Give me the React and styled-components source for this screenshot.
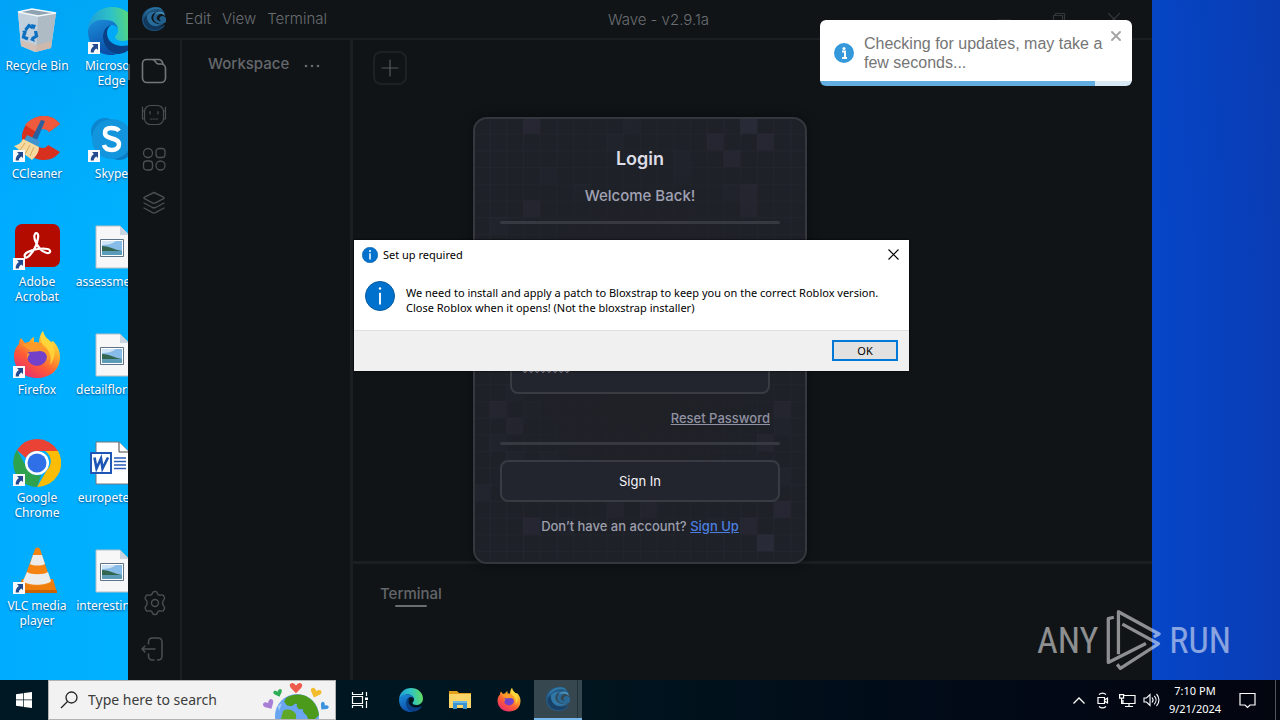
import React, { useId } from "react";
import styled, { createGlobalStyle, css } from "styled-components";

const GlobalStyle = createGlobalStyle`
  *, *::before, *::after { box-sizing: border-box; }
  html, body { margin: 0; }
  body { font-family: "Open Sans", "Noto Sans", sans-serif; overflow: hidden; }
  button, input { font: inherit; color: inherit; margin: 0; }
  button { padding: 0; border: 0; background: none; cursor: pointer; }
  svg { display: block; flex: none; }
`;

const ui = `"Noto Sans", "Open Sans", sans-serif`;
const rounded = `Inter, Roboto, sans-serif`;

/* ---------- desktop ---------- */

const Screen = styled.div`
  position: relative;
  display: grid;
  grid-template-rows: 1fr 40px;
  min-height: 100vh;
`;

const Desktop = styled.main`
  position: relative;
  overflow: hidden;
  background:
    linear-gradient(180deg, rgba(0, 60, 150, 0.08), transparent 35%),
    linear-gradient(90deg, #00acff 0%, #00b2ff 10%, #0546c8 90%, #0a3cb4 100%);
`;

const IconGrid = styled.ul`
  list-style: none;
  margin: 0;
  padding: 7px 0 0;
  display: grid;
  grid-template-columns: 74px 75px;
  grid-auto-rows: 108px;
`;

const DesktopItem = styled.li`
  display: flex;
  flex-direction: column;
  align-items: center;
  gap: 3px;
  color: #fff;
  font: 12px/15px ${ui};
  text-align: center;
  text-shadow: 0 1px 2px rgba(0, 30, 80, 0.7);
`;

const IconBox = styled.div`
  position: relative;
  width: 48px;
  height: 48px;
`;

const Badge = styled.svg`
  position: absolute;
  left: 0;
  bottom: 1px;
`;

const ItemLabel = styled.span`
  width: 74px;
  display: flex;
  justify-content: center;
  white-space: pre-line;
`;

/* ---------- application window ---------- */

const AppWindow = styled.section`
  position: absolute;
  inset: 0 10%;
  display: grid;
  grid-template-rows: 40px 1fr;
  background: #101417;
  color: #6b6e72;
  font-family: ${rounded};
`;

const TitleBar = styled.header`
  display: flex;
  align-items: center;
  justify-content: space-between;
  padding: 0 24px 0 13px;
  border-bottom: 2px solid #1b1e22;
  font-size: 15px;
  font-weight: 300;
`;

const MenuGroup = styled.nav`
  display: flex;
  align-items: center;
  gap: 11px;
`;

const LogoSlot = styled.span`
  margin-right: 7px;
`;

const MenuButton = styled.button`
  line-height: 20px;
`;

const WindowControls = styled.div`
  display: flex;
  gap: 27px;
  color: #33373b;
`;

const ControlButton = styled.button`
  width: 28px;
  height: 28px;
  display: grid;
  place-items: center;
`;

const Body = styled.div`
  display: grid;
  grid-template-columns: 54px 171px 1fr;
`;

const Rail = styled.nav`
  display: flex;
  flex-direction: column;
  justify-content: space-between;
  padding: 13px 0;
  border-right: 2px solid #1b1e22;
`;

const RailGroup = styled.div`
  display: flex;
  flex-direction: column;
  gap: ${(p) => p.$gap}px;
`;

const RailButton = styled.button`
  position: relative;
  width: 100%;
  height: 36px;
  display: grid;
  place-items: center;
  color: ${(p) => (p.$active ? "#74777a" : "#4b4f53")};
  ${(p) =>
    p.$active &&
    css`
      &::before {
        content: "";
        position: absolute;
        left: 0;
        top: 11px;
        width: 2px;
        height: 16px;
        background: #46494d;
      }
    `}
`;

const Workspace = styled.aside`
  display: flex;
  align-items: flex-start;
  justify-content: space-between;
  padding: 14px 30px 0 26px;
  border-right: 3px solid #1b1e22;
  color: #65686c;
`;

const PanelTitle = styled.h2`
  margin: 0;
  font-size: 15px;
  line-height: 20px;
  font-weight: 500;
`;

const DotsButton = styled.button`
  height: 24px;
`;

const Main = styled.div`
  display: grid;
  grid-template-rows: 1fr 119px;
`;

const Editor = styled.section`
  padding: 11px 20px;
`;

const AddTab = styled.button`
  width: 34px;
  height: 34px;
  display: grid;
  place-items: center;
  border: 2px solid #1d2125;
  border-radius: 8px;
  color: #55585c;
`;

const TerminalPanel = styled.section`
  border-top: 3px solid #1b1e22;
  padding: 19px 27px;
`;

const TerminalTab = styled.button`
  display: flex;
  flex-direction: column;
  align-items: center;
  font-size: 15px;
  line-height: 22px;
  font-weight: 500;
  color: #63666a;
  &::after {
    content: "";
    width: 32px;
    height: 2px;
    border-radius: 1px;
    background: #6a6d71;
  }
`;

/* ---------- login ---------- */

const LoginLayer = styled.div`
  position: absolute;
  inset: 0;
  display: grid;
  place-items: center;
  pointer-events: none;
`;

const LoginCard = styled.form`
  position: relative;
  overflow: hidden;
  width: 334px;
  padding: 26px 25px;
  border: 2px solid #34373d;
  border-radius: 14px;
  background: #1f2129;
  display: flex;
  flex-direction: column;
  pointer-events: auto;
  box-shadow: 0 0 12px rgba(0, 0, 0, 0.4);
`;

const CardPattern = styled.svg`
  position: absolute;
  inset: 0;
`;

const CardBody = styled.div`
  position: relative;
  display: flex;
  flex-direction: column;
  text-align: center;
`;

const LoginTitle = styled.h1`
  margin: 0;
  font-size: 18px;
  line-height: 28px;
  font-weight: 600;
  color: #dcdde6;
`;

const Welcome = styled.p`
  margin: 13px 0 15px;
  font-size: 15px;
  line-height: 20px;
  font-weight: 500;
  color: #a0a2b4;
`;

const Divider = styled.hr`
  width: 100%;
  height: 3px;
  margin: 0;
  border: 0;
  border-radius: 2px;
  background: #36393f;
`;

const Fields = styled.div`
  display: flex;
  flex-direction: column;
  gap: 21px;
  padding: 65px 10px 0;
`;

const TextField = styled.input`
  width: 100%;
  height: 42px;
  padding: 0 10px;
  border: 2px solid #383b42;
  border-radius: 8px;
  outline: 0;
  background: #23252e;
  font-size: 12px;
  &::placeholder {
    color: #b4b6c0;
    opacity: 1;
  }
`;

const ResetLink = styled.a`
  align-self: flex-end;
  margin: 14px 10px;
  font-size: 13px;
  line-height: 20px;
  font-weight: 500;
  color: #9092a2;
`;

const SignIn = styled.button`
  height: 42px;
  margin: 15px 0 14px;
  border: 2px solid #383b42;
  border-radius: 8px;
  background: #23252e;
  color: #f4f4f8;
  font-size: 13px;
  font-weight: 400;
`;

const Footnote = styled.p`
  margin: 0;
  font-size: 13px;
  line-height: 20px;
  font-weight: 500;
  color: #9c9eac;
  white-space: nowrap;
  a {
    color: #4b7fe0;
  }
`;

/* ---------- toast ---------- */

const Toast = styled.div`
  position: absolute;
  top: 20px;
  right: 20px;
  width: 312px;
  overflow: hidden;
  display: grid;
  grid-template-columns: 30px 1fr 12px;
  align-items: center;
  padding: 14px 10px 14px 14px;
  border-radius: 6px;
  background: linear-gradient(90deg, #62aee0 88%, #d7e9f5 88%) bottom / 100% 5px no-repeat #fff;
  color: #757575;
  font: 16px/19px "Liberation Sans", Arial, sans-serif;
`;

const ToastText = styled.p`
  margin: 0;
`;

const ToastClose = styled.button`
  align-self: start;
  height: 12px;
  margin-top: -4px;
  color: #a6a6a6;
`;

/* ---------- message box ---------- */

const MessageBox = styled.div`
  position: absolute;
  left: 354px;
  top: 240px;
  width: 555px;
  background: #fff;
  color: #000;
  font: 11px/15px ${ui};
  box-shadow: 0 0 2px #000;
`;

const BoxHeader = styled.header`
  display: flex;
  align-items: center;
  gap: 5px;
  height: 29px;
  padding: 0 10px 0 8px;
`;

const BoxTitle = styled.h2`
  flex: 1;
  margin: 0;
  font-size: 11px;
  font-weight: 400;
`;

const BoxBody = styled.div`
  display: flex;
  gap: 11px;
  padding: 12px 11px 15px;
`;

const BoxText = styled.p`
  margin: 4px 0 0;
  white-space: pre;
`;

const BoxFooter = styled.footer`
  display: flex;
  justify-content: flex-end;
  padding: 9px 11px 10px;
  border-top: 1px solid #dfdfdf;
  background: #f0f0f0;
`;

const OkButton = styled.button`
  width: 66px;
  height: 21px;
  border: 2px solid #0078d7;
  background: #e1e1e1;
  line-height: 15px;
`;

/* ---------- watermark ---------- */

const Watermark = styled.div`
  position: absolute;
  right: 49px;
  bottom: 8px;
  display: flex;
  align-items: center;
  gap: 8px;
  color: #fff;
  opacity: 0.52;
  font: 36px/40px "Liberation Sans Narrow", "Roboto Condensed", "Liberation Sans", sans-serif;
  pointer-events: none;
`;

/* ---------- taskbar ---------- */

const Taskbar = styled.footer`
  display: flex;
  align-items: stretch;
  background: linear-gradient(90deg, #001823 0%, #00151f 45%, #020a18 75%, #03050f 100%);
  color: #fff;
`;

const TaskButton = styled.button`
  position: relative;
  width: 48px;
  display: grid;
  place-items: center;
  ${(p) =>
    p.$active &&
    css`
      background: linear-gradient(90deg, transparent 43px, #22323b 43px, #22323b 44px, transparent 44px) #37474f;
      border-bottom: 2px solid #76b9ed;
    `}
`;

const SearchBox = styled.label`
  width: 288px;
  display: flex;
  align-items: center;
  gap: 10px;
  padding: 0 4px 0 11px;
  border: 1px solid #b0b2b4;
  background: #f2f2f2;
  color: #222;
`;

const SearchInput = styled.input`
  flex: 1;
  min-width: 0;
  padding: 0;
  border: 0;
  outline: 0;
  background: none;
  font: 14px/20px ${ui};
  &::placeholder {
    color: #3c3c3c;
    opacity: 1;
  }
`;

const PinnedApps = styled.div`
  display: flex;
  gap: 1px;
  margin-left: 3px;
`;

const Tray = styled.div`
  margin-left: auto;
  display: flex;
  align-items: stretch;
`;

const TrayButton = styled.button`
  width: 24px;
  display: grid;
  place-items: center;
`;

const Clock = styled.button`
  width: 64px;
  font: 11px/18px ${ui};
  white-space: pre-line;
`;

const NoticeButton = styled.button`
  width: 40px;
  margin-right: 8px;
  display: grid;
  place-items: center;
`;

const ShowDesktop = styled.button`
  width: 5px;
  border-left: 1px solid #50545e;
`;

/* ---------- drawings ---------- */

const ShortcutBadge = () => (
  <Badge width="12" height="12" viewBox="0 0 12 12" aria-hidden="true">
    <path d="M0 0h12v12H0z" fill="#f6f8fb" />
    <path d="M4 2h6v6L8.300 6.400C6.300 7.600 5.800 9 5.800 10.500H2.800C2.500 7.500 3.700 5.500 5.900 4z" fill="#234a8e" />
  </Badge>
);

const RecycleArt = () => (
  <svg width="48" height="48" viewBox="0 0 48 48">
    <path d="M5 5l14-3 24 4-5 35-16 4-14-6z" fill="#d5dde2" />
    <path d="M5 5l20 4-2 36-15-6z" fill="#c1d0dc" />
    <path d="M25 9l18-3-5 35-15 4z" fill="#aebac4" />
    <path d="M8 33l15 5 16-4-1 7-15 4-15-6z" fill="#d9b8a4" opacity=".7" />
    <path d="M5 5l14-3 24 4-18 3z" fill="#8fa2b1" stroke="#f2f7fa" strokeWidth="1.500" />
    <g fill="none" stroke="#0b6fc2" strokeWidth="3.200">
      <path d="M12.500 23l3.500-4.500 4 2.500" />
      <path d="M22.500 24l1 5-4.500 3" />
      <path d="M15 32l-4.500-2 1-4.500" />
    </g>
    <path d="M18 17l5 1-2 5zM20 29l-3 4 5 2zM9 24l5-1-1 5z" fill="#0b6fc2" />
  </svg>
);

const EdgeArt = ({ size = 48 }) => {
  const id = useId();
  return (
    <svg width={size} height={size} viewBox="0 0 48 48">
      <defs>
        <linearGradient id={id + "a"} x1="0" x2="1" y1=".3" y2=".2">
          <stop offset="0" stopColor="#1f9fd8" />
          <stop offset=".5" stopColor="#30c3c4" />
          <stop offset="1" stopColor="#66e05a" />
        </linearGradient>
        <linearGradient id={id + "b"} x1="0" x2=".4" y1="0" y2="1">
          <stop offset="0" stopColor="#1b8fdc" />
          <stop offset="1" stopColor="#0c4fa8" />
        </linearGradient>
      </defs>
      <path d="M0 23C1 9 11 0 24 0c14 0 24 10 24 21 0 8-6 13-13 13-5 0-8-2-8-4 0-1 3-3 3-7 0-5-5-10-12-10C9 13 2 18 0 23z" fill={`url(#${id}a)`} />
      <path d="M0 23c2-7 9-11 17-10 8 0 13 4 13 10 0-3-3-5-6-5-5 0-9 5-9 12 0 9 6 16 14 17-3 1-4 1-6 1C10 48 0 38 0 24z" fill={`url(#${id}b)`} />
      <path d="M15 30c0-6 3-11 8-12-3 2-4 5-4 8 0 8 7 13 15 13 4 0 7-1 10-2 1-1 2 0 1 1-5 7-10 9-16 9-8-1-14-8-14-17z" fill="#0b3f86" />
    </svg>
  );
};

const CCleanerArt = () => (
  <svg width="48" height="48" viewBox="0 0 48 48">
    <path d="M47 9C42 3 37 1 31 1 18 1 9 11 9 23c0 12 9 22 22 22 7 0 12-3 16-8l-12-7c-1 2-3 3-5 3-5 0-9-4-9-9 0-6 4-10 9-10 3 0 5 1 6 3z" fill="#d7301f" />
    <path d="M47 9C42 3 37 1 31 1c-8 0-15 4-19 9l11 7c2-2 4-3 7-3 3 0 5 1 6 3z" fill="#ef5a3c" />
    <path d="M28 5l4 1-8 19-5-2z" fill="#2b5f9d" />
    <path d="M14 20l13 6-3 7-14-6z" fill="#3f93cf" />
    <path d="M10 24l16 8c0 6-3 9-7 13L1 31c4-1 7-3 9-7z" fill="#f5d99e" />
    <path d="M12 28L7 35M17 30l-5 9M21 32l-4 9" stroke="#d8ab5e" />
  </svg>
);

const SkypeArt = () => (
  <svg width="48" height="48" viewBox="0 0 48 48">
    <circle cx="17" cy="17" r="14" fill="#0c86cf" />
    <circle cx="31" cy="31" r="14" fill="#0a7cc6" />
    <circle cx="24" cy="24" r="20" fill="#1295dc" />
    <path d="M31 16c-2-3-5-3-8-3-4 0-6 2-6 5 0 7 14 4 14 11 0 4-3 6-7 6s-7-1-8-5" fill="none" stroke="#fff" strokeWidth="4.500" />
  </svg>
);

const AcrobatArt = () => (
  <svg width="48" height="48" viewBox="0 0 48 48">
    <rect x="2" y="1" width="45" height="43" rx="7" fill="#b30b00" />
    <path d="M12 34c-2-3 4-7 13-8 8-1 13 0 12 3-1 2-6 1-10-3-4-5-7-12-5-15 1-2 4-1 3 4-1 7-5 14-9 18-2 2-4 2-4 1z" fill="none" stroke="#fff" strokeWidth="2.200" />
  </svg>
);

const FirefoxArt = ({ size = 48 }) => {
  const id = useId();
  return (
    <svg width={size} height={size} viewBox="0 0 48 48">
      <defs>
        <linearGradient id={id} x1=".85" y1=".05" x2=".25" y2="1">
          <stop offset="0" stopColor="#fff04c" />
          <stop offset=".35" stopColor="#ffa629" />
          <stop offset=".65" stopColor="#ff5a36" />
          <stop offset="1" stopColor="#e52b72" />
        </linearGradient>
      </defs>
      <path d="M30 0c1 6 5 8 8 11l2-1c4 4 7 9 7 16 0 13-10 21-23 21S1 38 1 25c0-6 3-10 5-12 0-3 1-5 2-6l4 5c2-1 3-1 4-1 2-3 3-4 5-5v5c2 0 3 0 5 1 0-4 1-9 4-12z" fill={`url(#${id})`} />
      <circle cx="24" cy="25" r="10" fill="#7340c9" />
      <path d="M14 22c2-2 8-1 13-2 5 0 8 4 7 9 3-5 2-14-5-17-6-2-14 2-22 1 5 1 6 5 10 6-3 2-4 6-2 9 0-2 0-4 2-5z" fill="#ff9a2a" />
      <path d="M30 0c1 6 5 8 8 11 5 6 5 16-1 23 2-8 0-14-5-18-5-4-5-10-2-16z" fill="#ffd93b" opacity=".8" />
    </svg>
  );
};

const ChromeArt = () => (
  <svg width="48" height="48" viewBox="0 0 48 48">
    <path d="M24 0a24 24 0 0 1 21 12H24a12 12 0 0 0-11 7L4 11A24 24 0 0 1 24 0z" fill="#ea4335" />
    <path d="M45 12a24 24 0 0 1-21 36l10-17a12 12 0 0 0-2-19z" fill="#fbbc05" />
    <path d="M4 11l10 18a12 12 0 0 0 14 7l-4 12A24 24 0 0 1 4 11z" fill="#2ea24c" />
    <circle cx="24" cy="24" r="12" fill="#fff" />
    <circle cx="24" cy="24" r="9.500" fill="#2f6fe8" />
  </svg>
);

const VlcArt = () => (
  <svg width="48" height="48" viewBox="0 0 48 48">
    <path d="M9 32h31l4 14H4z" fill="#ee7d0c" />
    <path d="M4 43h40v3H4z" fill="#c96200" />
    <path d="M22 2c1-2 4-2 5 0l11 33c-4 5-24 5-28 0z" fill="#f58412" />
    <path d="M20 8h9l3 9c-3 2-12 2-15 0zM14 25c4 3 17 3 21 0l3 9c-4 5-24 5-28 0z" fill="#ececec" />
  </svg>
);

const PictureFileArt = () => (
  <svg width="48" height="48" viewBox="0 0 48 48">
    <path d="M8 3h24l9 9v33H8z" fill="#f7f7f7" stroke="#b9bfc5" />
    <path d="M32 3v9h9z" fill="#c8d6e2" />
    <path d="M12.500 16.500h23v17h-23z" fill="#fff" stroke="#5d7389" />
    <path d="M14 18h20v14H14z" fill="#88bce8" />
    <path d="M14 18h14c-4 3-9 4-14 4z" fill="#cfe5f7" />
    <path d="M14 23c7 0 10 3 20 5v1H14z" fill="#33654f" />
    <path d="M14 28h20v4H14z" fill="#5c9cb8" />
  </svg>
);

const WordFileArt = () => (
  <svg width="48" height="48" viewBox="0 0 48 48">
    <path d="M8 3h23l10 10v32H8z" fill="#fff" stroke="#70757c" />
    <path d="M31 3v10h10" fill="#fff" stroke="#444" />
    <path d="M26 19h12M26 22.500h12M26 26h12M26 29.500h12" stroke="#2b5bb8" strokeWidth="1.300" />
    <path d="M3 14h20v20H3z" fill="#fff" stroke="#1f55b5" strokeWidth="2" />
    <path d="M6.500 18.500l2 11 4.500-10 1.500 10 5.500-11" fill="none" stroke="#1f55b5" strokeWidth="2.600" />
  </svg>
);

const WaveLogo = ({ size = 26 }) => (
  <svg width={size} height={size} viewBox="0 0 26 26" opacity=".8">
    <path d="M18 1.500C9-1 1 5 1 13c0 7 5 12 12 12 5 0 9-2 11-6-4 2-9 2-12-1-4-4-2-10 3-12 4-1 7 0 9 2-1-3-3-5-6-6.500z" fill="#1d5f94" />
    <path d="M18 1.500C11 0 4 4 3 11c2-4 7-8 13-8 3 0 5 1 6 2-1-2-2-3-4-3.500z" fill="#3186bd" />
    <path d="M2.500 15c1 5 5 9 11 9 4 0 8-2 10-5-4 2-9 2.500-13 0-4-2.500-5-7-3-11-3 2-5 4-5 7z" fill="#12406d" />
    <path d="M6 9c-1 6 3 11 9 11 3 0 6-1 8-2-5 1-10 0-12-4-2-4 1-8 5-8-4-1-8 0-10 3z" fill="#2f82bd" />
    <path d="M24 8c-3-3-9-3-11 1-2 3 0 7 3 8 3 2 7 1 9-1V12c-1-2-4-3-6-1-1 1-1 3 1 4-3 0-5-2-4-4 1-3 5-4 8-3z" fill="#2672ab" />
    <path d="M23 7c-3-2-7-2-9 1 3-1 7-1 10 2z" fill="#4ba2d4" />
  </svg>
);

const Stroke = ({ size = 26, w = 1.5, children, box = 26 }) => (
  <svg width={size} height={size} viewBox={`0 0 ${box} ${box}`} fill="none" stroke="currentColor" strokeWidth={w} strokeLinecap="round" strokeLinejoin="round" aria-hidden="true">
    {children}
  </svg>
);

const FolderGlyph = () => (
  <Stroke w={1.600}>
    <path d="M5.500 1.500H11c1.500 0 2.300.6 3.200 1.800l1.300 1.700c.7.800 1.300 1 2.300 1H20c2.700 0 4.500 2 4.500 4.500V20c0 2.500-2 4.500-4.500 4.500H6c-2.500 0-4.500-2-4.500-4.500V5.500c0-2.200 1.800-4 4-4z" />
    <path d="M12 1.500h5.500c2.300 0 3.800 1.600 4.500 4.500" />
  </Stroke>
);
const RobotGlyph = () => (
  <Stroke w={1.200}>
    <rect x="3.500" y="3.500" width="19" height="19" rx="6" />
    <path d="M3.500 9H1.500v8h2M22.500 9h2v8h-2M1.500 9V5M24.500 9V5M9 9.500v2.500M17 9.500v2.500M9.500 17h1.500M12.500 17h1M15 17h1.500" />
  </Stroke>
);
const AppsGlyph = () => (
  <Stroke w={1.300}>
    <circle cx="7" cy="7" r="4.500" />
    <rect x="15" y="2.500" width="9" height="9" rx="3" />
    <rect x="2.500" y="15" width="9" height="9" rx="3" />
    <circle cx="19.500" cy="19.500" r="4.500" />
  </Stroke>
);
const LayersGlyph = () => (
  <Stroke w={1.400}>
    <path d="M13 2.500l9.500 4.700c.8.400.8 1 0 1.400l-8 4.200c-1 .5-2 .5-3 0l-8-4.200c-.8-.4-.8-1 0-1.400z" />
    <path d="M3 13l8.500 4.500c1 .5 2 .5 3 0L23 13M3 18l8.500 4.700c1 .5 2 .5 3 0L23 18" />
  </Stroke>
);
const GearGlyph = () => (
  <Stroke w={1.400}>
    <circle cx="14" cy="13" r="3.500" />
    <path d="M11.200 3.500c.4-1.400 1-2 2.300-2h1c1.200 0 1.700.6 2 2 .4 1.400 1.700 2 3 1.600 1.500-.5 2.400-.4 3 .6l.8 1.400c.7 1 .4 1.800-.6 2.800-1.500 1.500-1.500 4.700 0 6.200 1 1 1.300 1.800.6 2.800l-.8 1.400c-.6 1-1.500 1.100-3 .6-1.300-.4-2.600.2-3 1.600-.3 1.400-.8 2-2 2h-1c-1.300 0-1.900-.6-2.300-2-.4-1.400-1.700-2-3-1.600-1.500.5-2.400.4-3-.6l-.8-1.400c-.7-1-.4-1.800.6-2.800 1.500-1.500 1.500-4.700 0-6.200-1-1-1.300-1.800-.6-2.800l.8-1.400c.6-1 1.500-1.100 3-.6 1.300.4 2.600-.2 3-1.600z" />
  </Stroke>
);
const ExitGlyph = () => (
  <Stroke w={1.500}>
    <path d="M7.500 8V6c0-2.500 1.500-4 4-4H17c2.500 0 4 1.500 4 4v14c0 2.500-1.500 4-4 4h-.5M13 24h-1.500c-2.500 0-4-1.500-4-4v-2M14 13H1M4 10l-3 3 3 3" />
  </Stroke>
);

const InfoDisc = ({ size }) => (
  <svg width={size} height={size} viewBox="0 0 32 32" aria-hidden="true">
    <circle cx="16" cy="16" r="15.500" fill="#0071cc" stroke="#00569c" />
    <path d="M16 12.500V25" stroke="#fff" strokeWidth={size > 20 ? 2 : 3} />
    <circle cx="16" cy="8" r={size > 20 ? 1.300 : 2} fill="#fff" />
  </svg>
);

const AnyRunMark = () => (
  <svg width="55" height="63" viewBox="268 28 168 190" fill="none" stroke="#fff" strokeWidth="10" strokeLinejoin="round" aria-hidden="true">
    <path d="M292 52L275 56V190L390 132" />
    <path d="M306 165V35L430 103L414 112" />
    <path d="M318 73L428 133L312 208L302 196" />
  </svg>
);

const Doodle = () => {
  const heart = "M0 3C-4-3-10 1-6 6L0 12 6 6C10 1 4-3 0 3z";
  return (
    <svg width="70" height="38" viewBox="0 0 70 38" aria-hidden="true">
      <circle cx="36" cy="35" r="22" fill="#6aa5f2" />
      <path d="M25 17c6-4 16-5 23 0 6 4 9 10 10 17l-4 4h-7c-1-6-6-5-5-10-4 1-7-1-6-5-4-1-3 3-7 2-5 0-4-4-6-4z" fill="#4c9a1c" />
      <path d="M22 30c5-3 10-1 13 3v5H20z" fill="#5fa827" />
      <path d="M17 25l4-3-3 8z" fill="#a9cdf8" />
      <path d={heart} fill="#ee5b4c" transform="translate(35 2) scale(.85)" />
      <path d={heart} fill="#2fae57" transform="translate(16 9) rotate(-20) scale(.6)" />
      <path d={heart} fill="#f3bc2d" transform="translate(56 8) rotate(20) scale(.75)" />
      <path d={heart} fill="#a97fd6" transform="translate(6 20) rotate(-30) scale(.75)" />
      <path d={heart} fill="#3b93e0" transform="translate(65 23) rotate(40) scale(.6)" />
    </svg>
  );
};

const CELL = 16.7;
const litCells = [
  [3, 0, 2], [16, 0, 3], [14, 1, 2], [17, 1, 2], [8, 1, 1], [15, 2, 2], [9, 0, 1], [12, 3, 1],
  [4, 3, 1], [6, 4, 1], [16, 4, 2], [16, 5, 2], [3, 5, 2], [1, 6, 1], [15, 4, 1], [12, 2, 1],
  [1, 17, 2], [3, 17, 1], [2, 18, 2], [18, 17, 2], [17, 19, 2], [1, 19, 1], [18, 18, 1],
  [2, 20, 1], [4, 20, 1], [8, 23, 2], [10, 23, 2], [18, 23, 2], [16, 24, 2], [17, 25, 3],
  [3, 24, 2], [5, 24, 1], [14, 24, 1], [0, 22, 1], [2, 16, 1], [18, 21, 1],
];

const Pattern = () => (
  <CardPattern width="334" height="445" viewBox="2 2 334 445" aria-hidden="true">
    <defs>
      <pattern id="cells" width={CELL} height={CELL} patternUnits="userSpaceOnUse">
        <path d={`M${CELL} 0H0V${CELL}`} fill="none" stroke="#2b2d36" strokeWidth="1" opacity=".7" />
      </pattern>
      <radialGradient id="fade" cx=".5" cy=".5" r=".6">
        <stop offset=".2" stopColor="#1f2127" />
        <stop offset="1" stopColor="#1f2127" stopOpacity="0" />
      </radialGradient>
    </defs>
    <rect width="340" height="450" fill="url(#cells)" />
    {litCells.map(([c, r, v]) => (
      <rect key={`${c}-${r}`} x={c * CELL} y={r * CELL} width={CELL} height={CELL} fill="#34364a" opacity={v * 0.16} />
    ))}
    <rect width="340" height="450" fill="url(#fade)" />
  </CardPattern>
);

/* ---------- page ---------- */

const desktopItems = [
  { label: "Recycle Bin", Art: RecycleArt },
  { label: "Microsoft\nEdge", Art: EdgeArt, link: true },
  { label: "CCleaner", Art: CCleanerArt, link: true },
  { label: "Skype", Art: SkypeArt, link: true },
  { label: "Adobe\nAcrobat", Art: AcrobatArt, link: true },
  { label: "assessmen...", Art: PictureFileArt },
  { label: "Firefox", Art: FirefoxArt, link: true },
  { label: "detailflorid...", Art: PictureFileArt },
  { label: "Google\nChrome", Art: ChromeArt, link: true },
  { label: "europeter....", Art: WordFileArt },
  { label: "VLC media\nplayer", Art: VlcArt, link: true },
  { label: "interesting...", Art: PictureFileArt },
];

const railTop = [
  ["Files", FolderGlyph],
  ["Assistant", RobotGlyph],
  ["Scripts", AppsGlyph],
  ["Layers", LayersGlyph],
];
const railBottom = [
  ["Settings", GearGlyph],
  ["Log out", ExitGlyph],
];

export default function App() {
  return (
    <Screen>
      <GlobalStyle />
      <Desktop>
        <IconGrid>
          {desktopItems.map(({ label, Art, link }) => (
            <DesktopItem key={label}>
              <IconBox>
                <Art />
                {link && <ShortcutBadge />}
              </IconBox>
              <ItemLabel>{label}</ItemLabel>
            </DesktopItem>
          ))}
        </IconGrid>

        <AppWindow aria-label="Wave">
          <TitleBar>
            <MenuGroup>
              <LogoSlot><WaveLogo /></LogoSlot>
              <MenuButton>Edit</MenuButton>
              <MenuButton>View</MenuButton>
              <MenuButton>Terminal</MenuButton>
            </MenuGroup>
            <span>Wave - v2.9.1a</span>
            <WindowControls>
              <ControlButton aria-label="Minimize">
                <Stroke size={14} box={14} w={1.200}><path d="M1 8h12" /></Stroke>
              </ControlButton>
              <ControlButton aria-label="Restore">
                <Stroke size={14} box={14} w={1.200}><path d="M3.500 3V1.500h9v9H11M1.500 3.500h9v9h-9z" /></Stroke>
              </ControlButton>
              <ControlButton aria-label="Close">
                <Stroke size={14} box={14} w={1.200}><path d="M1.500 1.500l11 11M12.500 1.500l-11 11" /></Stroke>
              </ControlButton>
            </WindowControls>
          </TitleBar>
          <Body>
            <Rail>
              <RailGroup $gap={8}>
                {railTop.map(([name, Glyph], i) => (
                  <RailButton key={name} aria-label={name} $active={i === 0}><Glyph /></RailButton>
                ))}
              </RailGroup>
              <RailGroup $gap={10}>
                {railBottom.map(([name, Glyph]) => (
                  <RailButton key={name} aria-label={name}><Glyph /></RailButton>
                ))}
              </RailGroup>
            </Rail>
            <Workspace>
              <PanelTitle>Workspace</PanelTitle>
              <DotsButton aria-label="Workspace options">
                <svg width="16" height="4" viewBox="0 0 16 4" fill="currentColor">
                  <circle cx="2" cy="2" r="1.300" /><circle cx="8" cy="2" r="1.300" /><circle cx="14" cy="2" r="1.300" />
                </svg>
              </DotsButton>
            </Workspace>
            <Main>
              <Editor>
                <AddTab aria-label="New tab">
                  <Stroke size={18} box={18} w={1.200}><path d="M9 1v16M1 9h16" /></Stroke>
                </AddTab>
              </Editor>
              <TerminalPanel>
                <TerminalTab>Terminal</TerminalTab>
              </TerminalPanel>
            </Main>
          </Body>

          <LoginLayer>
            <LoginCard onSubmit={(e) => e.preventDefault()}>
              <Pattern />
              <CardBody>
                <LoginTitle>Login</LoginTitle>
                <Welcome>Welcome Back!</Welcome>
                <Divider />
                <Fields>
                  <TextField type="text" aria-label="Username" />
                  <TextField type="password" aria-label="Password" placeholder="********" />
                </Fields>
                <ResetLink href="#reset">Reset Password</ResetLink>
                <Divider />
                <SignIn type="submit">Sign In</SignIn>
                <Footnote>Don’t have an account? <a href="#signup">Sign Up</a></Footnote>
              </CardBody>
            </LoginCard>
          </LoginLayer>

          <Toast role="status">
            <svg width="20" height="20" viewBox="0 0 20 20" aria-hidden="true">
              <circle cx="10" cy="10" r="10" fill="#3498db" />
              <path d="M8 8.500h3v6M8 15h5" stroke="#fff" strokeWidth="2" fill="none" />
              <circle cx="10" cy="5.500" r="1.500" fill="#fff" />
            </svg>
            <ToastText>Checking for updates, may take a few seconds...</ToastText>
            <ToastClose aria-label="Dismiss">
              <Stroke size={12} box={12} w={2}><path d="M2 2l8 8M10 2l-8 8" /></Stroke>
            </ToastClose>
          </Toast>
        </AppWindow>

        <MessageBox role="dialog" aria-labelledby="box-title">
          <BoxHeader>
            <InfoDisc size={16} />
            <BoxTitle id="box-title">Set up required</BoxTitle>
            <button aria-label="Close">
              <svg width="11" height="11" viewBox="0 0 11 11" stroke="#000" strokeWidth="1.100">
                <path d="M.5.5l10 10M10.500.5l-10 10" />
              </svg>
            </button>
          </BoxHeader>
          <BoxBody>
            <InfoDisc size={30} />
            <BoxText>
              {"We need to install and apply a patch to Bloxstrap to keep you on the correct Roblox version.\nClose Roblox when it opens! (Not the bloxstrap installer)"}
            </BoxText>
          </BoxBody>
          <BoxFooter>
            <OkButton>OK</OkButton>
          </BoxFooter>
        </MessageBox>

        <Watermark>
          <span>ANY</span>
          <AnyRunMark />
          <span>RUN</span>
        </Watermark>
      </Desktop>

      <Taskbar>
        <TaskButton aria-label="Start">
          <svg width="16" height="16" viewBox="0 0 16 16" fill="#fff">
            <path d="M0 2.300L7.300 1.200V7.600H0zM8 1.100L16 0v7.600H8zM0 8.300h7.300v6.500L0 13.700zM8 8.300h8V16l-8-1.100z" />
          </svg>
        </TaskButton>
        <SearchBox>
          <svg width="18" height="18" viewBox="0 0 18 18" fill="none" stroke="#222" strokeWidth="1.300" aria-hidden="true">
            <circle cx="11.500" cy="6.500" r="5.500" />
            <path d="M7.500 10.500L1 17" />
          </svg>
          <SearchInput type="text" aria-label="Search" placeholder="Type here to search" />
          <Doodle />
        </SearchBox>
        <TaskButton aria-label="Task view">
          <svg width="18" height="18" viewBox="0 0 18 18" fill="none" stroke="#fff" strokeWidth="1.200">
            <path d="M1.500 1v2.500h10V1M1.500 17v-2.500h10V17M1.500 5.500h10v7h-10zM15.500 1v4M15.500 10v7" />
            <path d="M14 6.500h3v2.500h-3z" fill="#fff" stroke="none" />
          </svg>
        </TaskButton>
        <PinnedApps>
          <TaskButton aria-label="Microsoft Edge"><EdgeArt size={24} /></TaskButton>
          <TaskButton aria-label="File Explorer">
            <svg width="22" height="20" viewBox="0 0 22 20">
              <path d="M0 1h8l2 2h12v4H0z" fill="#e3a01b" />
              <path d="M0 4h22v14H0z" fill="#fbd568" />
              <path d="M4 11h14v8h-4v-4H8v4H4z" fill="#3c93d2" />
              <path d="M4 11h14v2H4z" fill="#6bb7e6" />
            </svg>
          </TaskButton>
          <TaskButton aria-label="Firefox"><FirefoxArt size={24} /></TaskButton>
          <TaskButton aria-label="Wave" $active><WaveLogo /></TaskButton>
        </PinnedApps>
        <Tray>
          <TrayButton aria-label="Show hidden icons">
            <svg width="12" height="7" viewBox="0 0 12 7" fill="none" stroke="#fff" strokeWidth="1.300"><path d="M.5 6.500L6 1l5.500 5.500" /></svg>
          </TrayButton>
          <TrayButton aria-label="Meet now">
            <svg width="14" height="17" viewBox="0 0 14 17" fill="none" stroke="#fff" strokeWidth="1.200">
              <path d="M2 5.500h6.500v6H2zM8.500 8l3-2v5l-3-2M3 2.500c2-1.600 5-1.600 7 0M3 14.500c2 1.600 5 1.600 7 0" />
            </svg>
          </TrayButton>
          <TrayButton aria-label="Network">
            <svg width="17" height="15" viewBox="0 0 17 15" fill="none" stroke="#fff" strokeWidth="1.200">
              <path d="M5 2.500h11v8H4V7M10 10.500v3M6 13.500h8M.6 1.600h4v3.500h-4zM2.600 5v5.500H4" />
            </svg>
          </TrayButton>
          <TrayButton aria-label="Volume">
            <svg width="17" height="14" viewBox="0 0 17 14" fill="none" stroke="#fff" strokeWidth="1.100">
              <path d="M1 5h2.500L7 1.500v11L3.500 9H1zM9 4.500c1.300 1.500 1.300 3.500 0 5M11.300 2.800c2.300 2.500 2.300 6 0 8.500M13.500 1c3.300 3.500 3.300 8.500 0 12" />
            </svg>
          </TrayButton>
          <Clock>{"7:10 PM\n9/21/2024"}</Clock>
          <NoticeButton aria-label="Notifications">
            <svg width="17" height="17" viewBox="0 0 17 17" fill="none" stroke="#fff" strokeWidth="1.200"><path d="M1 1.500h15v11.500h-5L8.500 15.500 6 13H1z" /></svg>
          </NoticeButton>
          <ShowDesktop aria-label="Show desktop" />
        </Tray>
      </Taskbar>
    </Screen>
  );
}
